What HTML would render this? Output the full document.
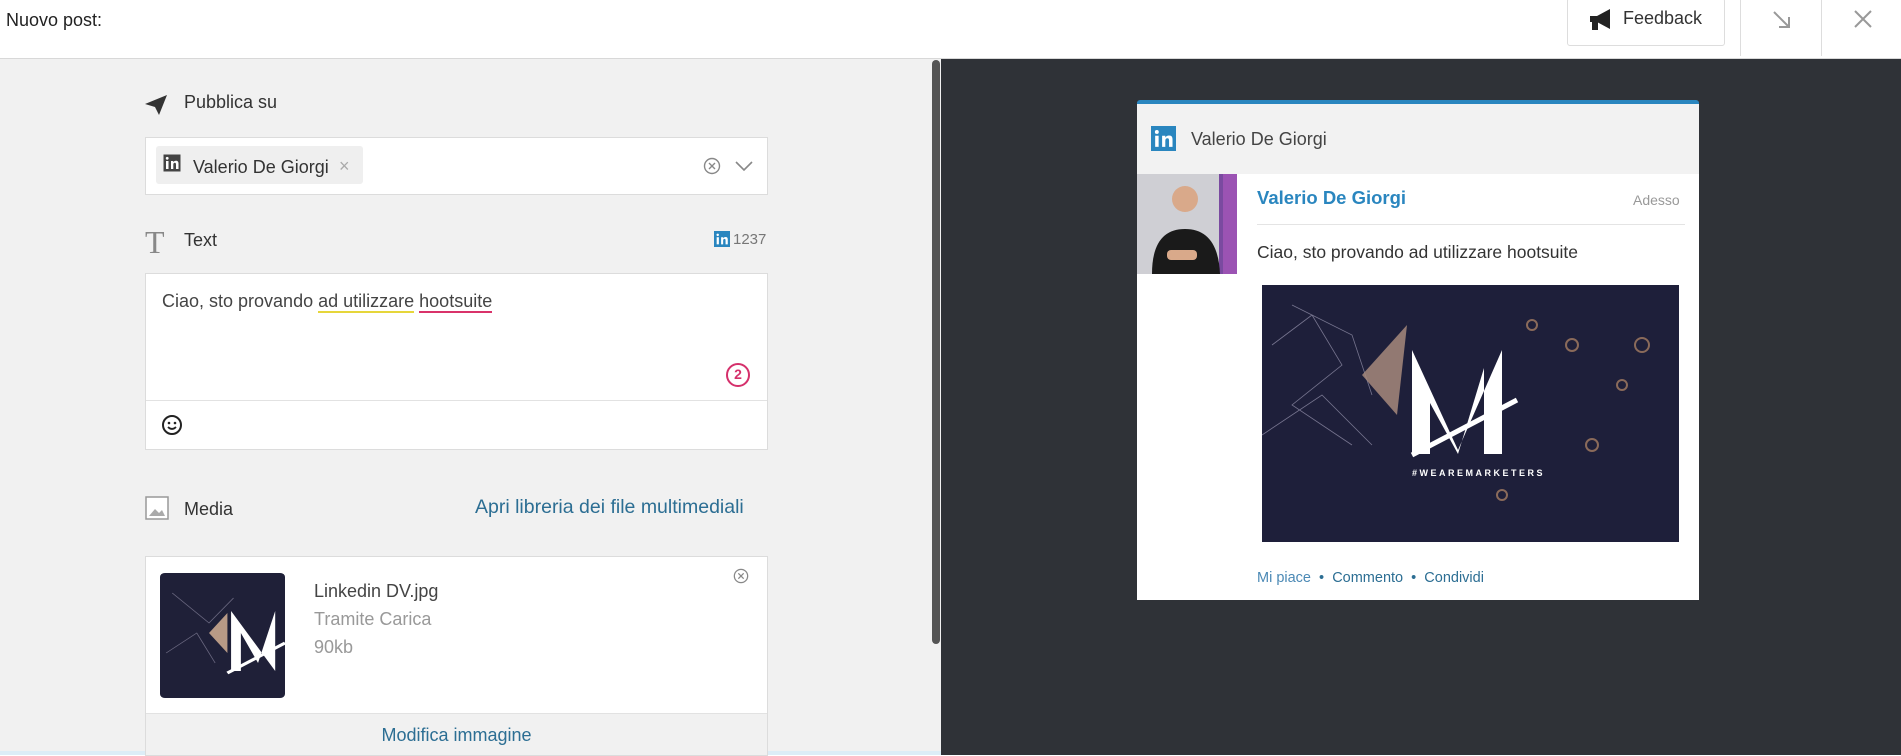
<!DOCTYPE html>
<html><head><meta charset="utf-8"><style>
*{box-sizing:border-box;margin:0;padding:0}
body{width:1901px;height:755px;overflow:hidden;font-family:"Liberation Sans",Arial,sans-serif;background:#fff;position:relative}
.abs{position:absolute}
.hdr{left:0;top:0;width:1901px;height:59px;background:#fff;border-bottom:1px solid #d8d8d8}
.left{left:0;top:59px;width:941px;height:696px;background:#f1f1f1}
.right{left:941px;top:59px;width:960px;height:696px;background:#2f3237}
.lbl{font-size:18px;color:#333}
.box{background:#fff;border:1px solid #dcdcdc}
.link{color:#2c6e93}
</style></head><body>
<div class="abs hdr"></div>
<div class="abs" style="left:6px;top:10px;font-size:18px;color:#222">Nuovo post:</div>
<div class="abs box" style="left:1567px;top:-2px;width:158px;height:48px;border-radius:3px;border-color:#ddd"></div>
<svg class="abs" style="left:1588px;top:8px" width="26" height="24" viewBox="0 0 26 24"><path d="M2 8h7l13-7v20l-13-7H2z" fill="#222"/><rect x="4" y="14" width="6" height="8" fill="#222"/></svg>
<div class="abs" style="left:1623px;top:8px;font-size:18px;color:#333">Feedback</div>
<div class="abs" style="left:1740px;top:0;width:1px;height:56px;background:#ddd"></div>
<div class="abs" style="left:1821px;top:0;width:1px;height:56px;background:#ddd"></div>
<svg class="abs" style="left:1771px;top:9px" width="22" height="22" viewBox="0 0 22 22"><path d="M3 3l15 15M8 18h10V8" stroke="#999" stroke-width="2" fill="none"/></svg>
<svg class="abs" style="left:1852px;top:8px" width="22" height="22" viewBox="0 0 22 22"><path d="M3 3l16 16M19 3L3 19" stroke="#999" stroke-width="2"/></svg>

<div class="abs left"></div>
<div class="abs right"></div>
<div class="abs" style="left:932px;top:60px;width:8px;height:584px;background:#555;border-radius:4px"></div>
<div class="abs" style="left:0;top:751px;width:941px;height:4px;background:#dcedf7"></div>

<svg class="abs" style="left:144px;top:94px" width="24" height="22" viewBox="0 0 24 22"><path d="M1 10L23 1 15 21 11 13z M11 13L23 1" fill="#333"/></svg>
<div class="abs lbl" style="left:184px;top:92px">Pubblica su</div>
<div class="abs box" style="left:145px;top:137px;width:623px;height:58px"></div>
<div class="abs" style="left:156px;top:146px;width:207px;height:38px;background:#efefef;border-radius:3px"></div>
<svg class="abs" style="left:163px;top:154px" width="18" height="18" viewBox="0 0 18 18"><rect x="0.5" y="0.5" width="17" height="17" fill="#444"/><rect x="3" y="7" width="2.5" height="8" fill="#fff"/><circle cx="4.2" cy="4.3" r="1.4" fill="#fff"/><path d="M8 7h2.3v1.3c.6-1 1.5-1.5 2.7-1.5 2 0 2.5 1.2 2.5 3V15H13v-4.5c0-1-.3-1.7-1.2-1.7s-1.5.7-1.5 1.8V15H8z" fill="#fff"/></svg>
<div class="abs" style="left:193px;top:157px;font-size:18px;color:#333">Valerio De Giorgi</div>
<div class="abs" style="left:339px;top:156px;font-size:18px;color:#aaa">×</div>
<svg class="abs" style="left:703px;top:157px" width="18" height="18" viewBox="0 0 18 18"><circle cx="9" cy="9" r="7.5" stroke="#888" stroke-width="1.4" fill="none"/><path d="M6 6l6 6M12 6l-6 6" stroke="#888" stroke-width="1.4"/></svg>
<svg class="abs" style="left:735px;top:160px" width="18" height="12" viewBox="0 0 18 12"><path d="M1 2l8 8 8-8" stroke="#888" stroke-width="1.6" fill="none"/></svg>

<div class="abs" style="left:145px;top:224px;font-family:'Liberation Serif',serif;font-size:32px;color:#888">T</div>
<div class="abs lbl" style="left:184px;top:230px">Text</div>
<svg class="abs" style="left:714px;top:231px" width="16" height="16" viewBox="0 0 18 18"><rect width="18" height="18" fill="#2a86bf"/><rect x="3" y="7" width="2.5" height="8" fill="#fff"/><circle cx="4.2" cy="4.3" r="1.4" fill="#fff"/><path d="M8 7h2.3v1.3c.6-1 1.5-1.5 2.7-1.5 2 0 2.5 1.2 2.5 3V15H13v-4.5c0-1-.3-1.7-1.2-1.7s-1.5.7-1.5 1.8V15H8z" fill="#fff"/></svg>
<div class="abs" style="left:733px;top:231px;font-size:15px;color:#777">1237</div>
<div class="abs box" style="left:145px;top:273px;width:623px;height:177px"></div>
<div class="abs" style="left:146px;top:400px;width:621px;height:1px;background:#e2e2e2"></div>
<div class="abs" style="left:162px;top:291px;font-size:18px;color:#444;white-space:nowrap">Ciao, sto provando <span style="border-bottom:2px solid #e6d63a">ad utilizzare</span> <span style="border-bottom:2px solid #d9336a">hootsuite</span></div>
<div class="abs" style="left:726px;top:363px;width:24px;height:24px;border:2.5px solid #d5306b;border-radius:50%;color:#d5306b;font-size:14px;font-weight:bold;text-align:center;line-height:19px">2</div>
<svg class="abs" style="left:161px;top:414px" width="22" height="22" viewBox="0 0 22 22"><circle cx="11" cy="11" r="9" stroke="#222" stroke-width="2" fill="none"/><circle cx="8" cy="9" r="1.3" fill="#222"/><circle cx="14" cy="9" r="1.3" fill="#222"/><path d="M7 13q4 4 8 0" stroke="#222" stroke-width="1.8" fill="none"/></svg>

<svg class="abs" style="left:145px;top:496px" width="24" height="24" viewBox="0 0 24 24"><rect x="1" y="1" width="22" height="22" fill="#fff" stroke="#999" stroke-width="1.5"/><path d="M4 20l6-7 4 4 3-3 3 6z" fill="#aaa"/></svg>
<div class="abs lbl" style="left:184px;top:499px">Media</div>
<div class="abs link" style="left:475px;top:496px;font-size:19.5px">Apri libreria dei file multimediali</div>

<div class="abs box" style="left:145px;top:556px;width:623px;height:200px"></div>
<div class="abs" style="left:146px;top:713px;width:621px;height:42px;background:#f1f1f1;border-top:1px solid #e2e2e2"></div>
<div class="abs link" style="left:146px;top:725px;width:621px;text-align:center;font-size:18px">Modifica immagine</div>
<svg class="abs" style="left:160px;top:573px" width="125" height="125" viewBox="0 0 102 125" preserveAspectRatio="none"><rect width="102" height="125" rx="4" fill="#1f2038"/><path d="M10 20l30 30 20-25M5 80l25-20 15 30" stroke="#6a6880" stroke-width="0.7" fill="none"/><path d="M40 60l15-20v40z" fill="#b89a86"/><path d="M58 38v60h8V60l14 30 14-52v60" fill="#fff"/><path d="M55 100l47-30" stroke="#fff" stroke-width="3"/></svg>
<div class="abs" style="left:314px;top:581px;font-size:18px;color:#444">Linkedin DV.jpg</div>
<div class="abs" style="left:314px;top:609px;font-size:18px;color:#999">Tramite Carica</div>
<div class="abs" style="left:314px;top:637px;font-size:18px;color:#999">90kb</div>
<svg class="abs" style="left:733px;top:568px" width="16" height="16" viewBox="0 0 18 18"><circle cx="9" cy="9" r="7.5" stroke="#888" stroke-width="1.4" fill="none"/><path d="M6 6l6 6M12 6l-6 6" stroke="#888" stroke-width="1.4"/></svg>

<div class="abs" style="left:1137px;top:100px;width:562px;height:500px;background:#fff;border-top:4px solid #2a86bf;border-radius:3px 3px 0 0"></div>
<div class="abs" style="left:1137px;top:104px;width:562px;height:70px;background:#f2f2f2"></div>
<svg class="abs" style="left:1151px;top:126px" width="25" height="25" viewBox="0 0 18 18"><rect width="18" height="18" fill="#2a86bf"/><rect x="3" y="7" width="2.5" height="8" fill="#fff"/><circle cx="4.2" cy="4.3" r="1.4" fill="#fff"/><path d="M8 7h2.3v1.3c.6-1 1.5-1.5 2.7-1.5 2 0 2.5 1.2 2.5 3V15H13v-4.5c0-1-.3-1.7-1.2-1.7s-1.5.7-1.5 1.8V15H8z" fill="#fff"/></svg>
<div class="abs" style="left:1191px;top:129px;font-size:18px;color:#444">Valerio De Giorgi</div>
<svg class="abs" style="left:1137px;top:174px" width="100" height="100" viewBox="0 0 100 100"><rect width="100" height="100" fill="#cfcfd4"/><path d="M82 0h18v100H82z" fill="#7a4aa0"/><path d="M86 0h14v100H86z" fill="#b05ac0" opacity=".6"/><circle cx="48" cy="25" r="13" fill="#d9a98a"/><path d="M15 100q0-45 33-45t35 45z" fill="#1a1a1a"/><rect x="30" y="76" width="30" height="10" rx="4" fill="#d9a98a"/></svg>
<div class="abs" style="left:1257px;top:187px;font-size:18.5px;font-weight:bold;color:#2a86bf">Valerio De Giorgi</div>
<div class="abs" style="left:1633px;top:192px;font-size:14px;color:#999">Adesso</div>
<div class="abs" style="left:1257px;top:224px;width:428px;height:1px;background:#e4e4e4"></div>
<div class="abs" style="left:1257px;top:242px;font-size:17.5px;color:#333">Ciao, sto provando ad utilizzare hootsuite</div>
<svg class="abs" style="left:1262px;top:285px" width="417" height="257" viewBox="0 0 417 257"><rect width="417" height="257" fill="#1e1f3a"/><g stroke="#77758f" stroke-width="0.8" fill="none"><path d="M10 60l40 -30 30 50 -50 40 60 40M30 20l60 30 20 60M0 150l60-40 50 50"/></g><path d="M100 90l45-50-10 90z" fill="#a78a7c" opacity=".85"/><g fill="none" stroke="#8a6a5a" stroke-width="2"><circle cx="270" cy="40" r="5"/><circle cx="310" cy="60" r="6"/><circle cx="380" cy="60" r="7"/><circle cx="360" cy="100" r="5"/><circle cx="330" cy="160" r="6"/><circle cx="240" cy="210" r="5"/></g><path d="M150 65v104h18V118l28 51 26-86v86h18V65l-44 100z" fill="#fff"/><path d="M150 170l105-55" stroke="#fff" stroke-width="5"/><text x="150" y="191" fill="#fff" font-size="9" font-family="Liberation Sans" font-weight="bold" letter-spacing="2.5">#WEAREMARKETERS</text></svg>
<div class="abs" style="left:1257px;top:570px;font-size:14.5px;color:#2c6e93;white-space:nowrap"><span style="color:#4b89b5">Mi piace</span> &nbsp;•&nbsp; Commento &nbsp;•&nbsp; Condividi</div>
</body></html>
